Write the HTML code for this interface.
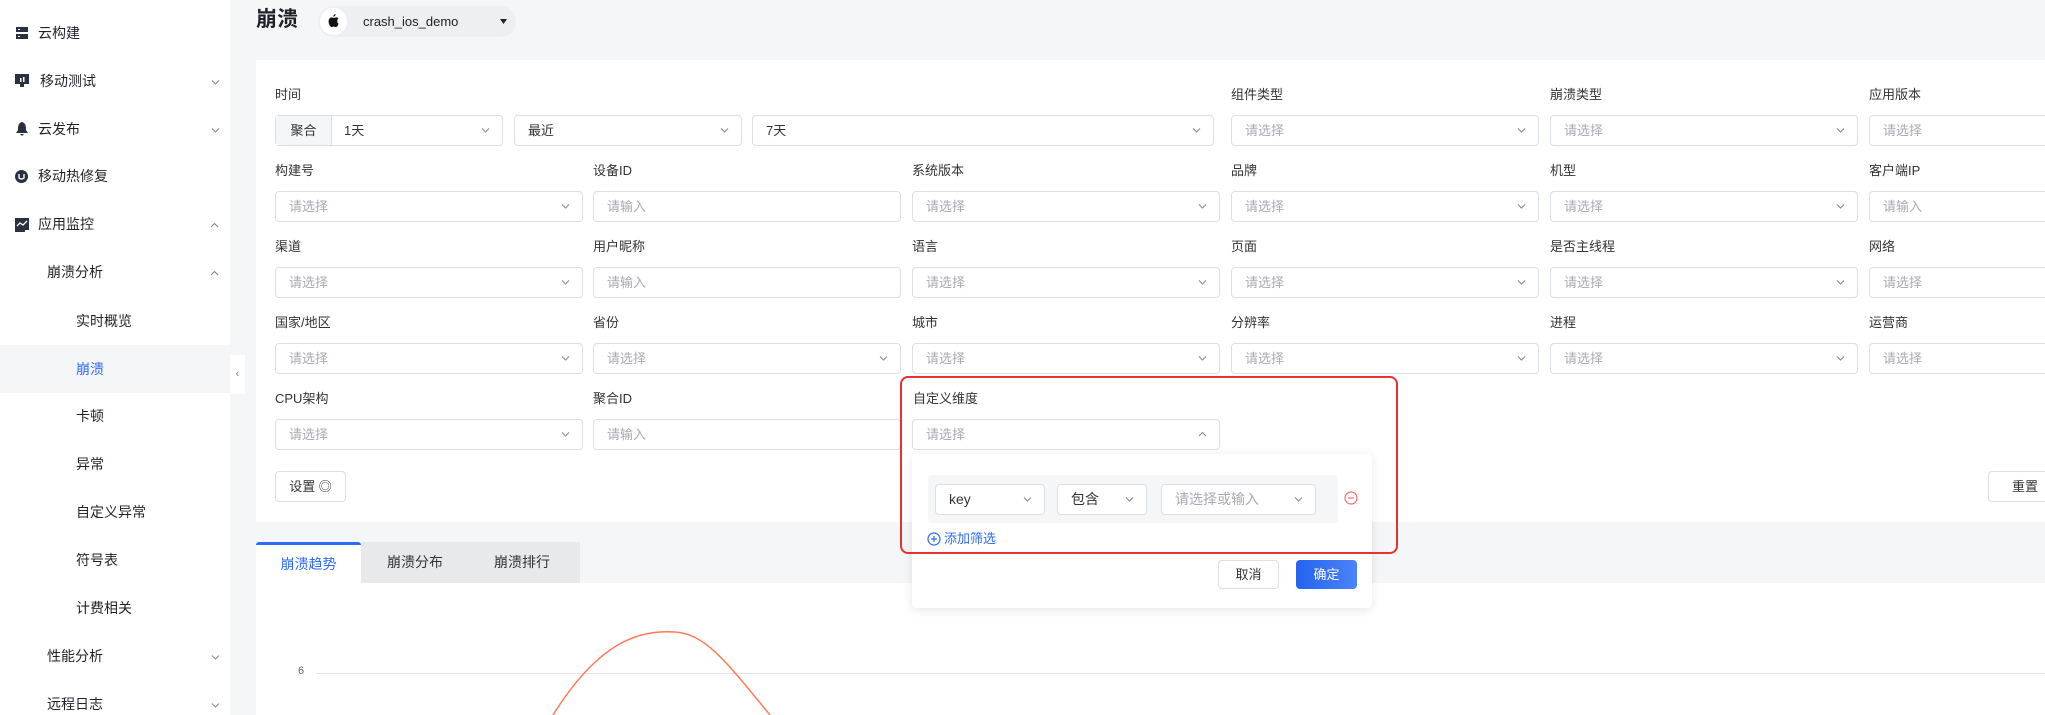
<!DOCTYPE html>
<html><head><meta charset="utf-8"><style>
*{box-sizing:border-box;margin:0;padding:0}
body{width:2045px;height:715px;overflow:hidden;background:#f5f6f8;font-family:"Liberation Sans","Noto Sans CJK SC",sans-serif;position:relative;color:#333}
.a{position:absolute}
.side{left:0;top:0;width:230px;height:715px;background:#fff}
.si{position:absolute;font-size:14px;color:#1f2329;line-height:20px}
.chev{position:absolute;width:9px;height:9px}
.lab{position:absolute;font-size:13px;color:#333;line-height:16px}
.in{position:absolute;height:31px;border:1px solid #dcdfe6;border-radius:4px;background:#fff;font-size:13px;color:#a8abb2;line-height:29px;padding-left:13px}
.in.v{color:#333}
.in svg{position:absolute;right:12px;top:11px}
.in.cut{border-right:none;border-radius:4px 0 0 4px}
.btn{position:absolute;border:1px solid #dcdfe6;border-radius:4px;background:#fff;font-size:13px;color:#333;text-align:center}
</style></head><body>
<div class="a side"></div>
<svg width="0" height="0" style="position:absolute"><defs><path id="dn" d="M1 1.5 L4.5 5 L8 1.5" fill="none" stroke="#888" stroke-width="1.1"/><path id="up" d="M1 5 L4.5 1.5 L8 5" fill="none" stroke="#888" stroke-width="1.1"/></defs></svg>

<!-- sidebar -->
<svg class="a" style="left:16px;top:27px" width="12" height="12"><rect x="0" y="0" width="12" height="5" fill="#2b3040"/><rect x="0" y="7" width="12" height="5" fill="#2b3040"/><rect x="2" y="2" width="2" height="1" fill="#fff"/><rect x="2" y="9" width="2" height="1" fill="#fff"/></svg>
<div class="si" style="left:38px;top:23px">云构建</div>
<svg class="a" style="left:15px;top:74px" width="14" height="13"><rect x="0" y="0" width="14" height="10" fill="#2b3040"/><rect x="5" y="10" width="4" height="3" fill="#2b3040"/><rect x="5" y="4" width="1.5" height="4" fill="#fff"/><rect x="8" y="3" width="1.5" height="5" fill="#fff"/></svg>
<div class="si" style="left:40px;top:71px">移动测试</div>
<svg class="chev" style="left:211px;top:78px" viewBox="0 0 9 7"><use href="#dn"/></svg>
<svg class="a" style="left:16px;top:122px" width="12" height="14"><path d="M6 0 C2 1 2 5 2 8 L0 11 L12 11 L10 8 C10 5 10 1 6 0Z M4 12 L8 12 L6 14Z" fill="#2b3040"/></svg>
<div class="si" style="left:38px;top:119px">云发布</div>
<svg class="chev" style="left:211px;top:126px" viewBox="0 0 9 7"><use href="#dn"/></svg>
<svg class="a" style="left:15px;top:170px" width="13" height="13"><circle cx="6.5" cy="6.5" r="6.5" fill="#2b3040"/><path d="M4 4 L4 8 Q6.5 10 9 8 L9 4" fill="none" stroke="#fff" stroke-width="1.4"/></svg>
<div class="si" style="left:38px;top:166px">移动热修复</div>
<svg class="a" style="left:15px;top:218px" width="14" height="14"><rect x="0" y="0" width="14" height="12" fill="#2b3040"/><path d="M2 8 L5 5 L8 7 L12 3" fill="none" stroke="#fff" stroke-width="1.3"/><rect x="0" y="12" width="10" height="2" fill="#2b3040"/></svg>
<div class="si" style="left:38px;top:214px">应用监控</div>
<svg class="chev" style="left:210px;top:221px" viewBox="0 0 9 7"><use href="#up"/></svg>
<div class="si" style="left:47px;top:262px">崩溃分析</div>
<svg class="chev" style="left:210px;top:269px" viewBox="0 0 9 7"><use href="#up"/></svg>
<div class="si" style="left:76px;top:311px">实时概览</div>
<div class="a" style="left:0;top:345px;width:230px;height:48px;background:#f5f6f8"></div>
<div class="si" style="left:76px;top:359px;color:#2f6bf5">崩溃</div>
<div class="si" style="left:76px;top:406px">卡顿</div>
<div class="si" style="left:76px;top:454px">异常</div>
<div class="si" style="left:76px;top:502px">自定义异常</div>
<div class="si" style="left:76px;top:550px">符号表</div>
<div class="si" style="left:76px;top:598px">计费相关</div>
<div class="si" style="left:47px;top:646px">性能分析</div>
<svg class="chev" style="left:211px;top:653px" viewBox="0 0 9 7"><use href="#dn"/></svg>
<div class="si" style="left:47px;top:694px">远程日志</div>
<svg class="chev" style="left:211px;top:701px" viewBox="0 0 9 7"><use href="#dn"/></svg>
<div class="a" style="left:230px;top:355px;width:15px;height:39px;background:#fff;font-size:11px;color:#888;line-height:39px;text-align:center">‹</div>

<!-- header -->
<div class="a" style="left:256px;top:6px;font-size:21px;font-weight:bold;color:#1f2329;line-height:28px">崩溃</div>
<div class="a" style="left:318px;top:6px;width:198px;height:31px;border-radius:16px;background:#eeeff2"></div>
<div class="a" style="left:320px;top:8px;width:27px;height:27px;border-radius:50%;background:#fff"></div>
<svg class="a" style="left:328px;top:14px" width="11" height="13" viewBox="0 0 11 13"><path d="M7.5 0 C7.6 1.4 6.6 2.7 5.3 2.7 C5.2 1.4 6.3 0.2 7.5 0Z M9.2 6.8 C9.2 5.3 10.4 4.6 10.5 4.5 C9.8 3.5 8.7 3.4 8.3 3.4 C7.3 3.3 6.4 4 5.9 4 C5.4 4 4.6 3.4 3.8 3.4 C2.7 3.5 1.7 4.1 1.1 5.1 C0 7.1 0.8 10 1.9 11.6 C2.4 12.4 3 13.2 3.8 13.1 C4.6 13.1 4.9 12.6 5.8 12.6 C6.8 12.6 7 13.1 7.9 13.1 C8.7 13.1 9.2 12.4 9.7 11.6 C10.3 10.7 10.6 9.9 10.6 9.8 C10.6 9.8 9.2 9.2 9.2 6.8Z" fill="#111"/></svg>
<div class="a" style="left:363px;top:13px;font-size:13px;color:#222;line-height:17px">crash_ios_demo</div>
<svg class="a" style="left:500px;top:19px" width="7" height="5"><path d="M0 0 L7 0 L3.5 5Z" fill="#222"/></svg>

<!-- filter card -->
<div class="a" style="left:256px;top:60px;width:1789px;height:462px;background:#fff"></div>
<div class="lab" style="left:275px;top:87px">时间</div>
<div class="in" style="left:275px;top:115px;width:228px;padding-left:0"><div class="a" style="left:0;top:0;width:56px;height:29px;background:#f5f6f8;border-right:1px solid #dcdfe6;color:#333;text-align:center">聚合</div><span class="a" style="left:68px;color:#333">1天</span><svg width="9" height="7"><use href="#dn"/></svg></div>
<div class="in v" style="left:514px;top:115px;width:228px">最近<svg width="9" height="7"><use href="#dn"/></svg></div>
<div class="in v" style="left:752px;top:115px;width:462px">7天<svg width="9" height="7"><use href="#dn"/></svg></div>

<div id="g"></div>
<script>
var cols=[275,593,912,1231,1550,1869];
var rows=[
[null,null,null,['组件类型','s'],['崩溃类型','s'],['应用版本','s']],
[['构建号','s'],['设备ID','i'],['系统版本','s'],['品牌','s'],['机型','s'],['客户端IP','i']],
[['渠道','s'],['用户昵称','i'],['语言','s'],['页面','s'],['是否主线程','s'],['网络','s']],
[['国家/地区','s'],['省份','s'],['城市','s'],['分辨率','s'],['进程','s'],['运营商','s']],
[['CPU架构','s'],['聚合ID','i'],null,null,null,null]];
var h='';
rows.forEach(function(r,ri){r.forEach(function(c,ci){if(!c)return;var ly=87+ri*76,iy=115+ri*76,x=cols[ci];
h+='<div class="lab" style="left:'+x+'px;top:'+ly+'px">'+c[0]+'</div>';
if(ci==5){h+='<div class="in cut" style="left:'+x+'px;top:'+iy+'px;width:176px">'+(c[1]=='s'?'请选择':'请输入')+'</div>';}
else h+='<div class="in" style="left:'+x+'px;top:'+iy+'px;width:308px">'+(c[1]=='s'?'请选择<svg width="9" height="7"><use href="#dn"/></svg>':'请输入')+'</div>';});});
document.getElementById('g').outerHTML=h;
</script>
<div class="btn" style="left:275px;top:471px;width:71px;height:31px;line-height:29px">设置 ◎</div>
<div class="btn" style="left:1988px;top:471px;width:57px;height:31px;line-height:29px;border-right:none;border-radius:4px 0 0 4px;text-align:left;padding-left:23px">重置</div>

<!-- tabs -->
<div class="a" style="left:256px;top:542px;width:105px;height:41px;background:#fff;border-top:3px solid #2f6bf5;border-radius:3px 3px 0 0;font-size:14px;color:#2f6bf5;text-align:center;line-height:38px">崩溃趋势</div>
<div class="a" style="left:361px;top:542px;width:219px;height:41px;background:#e8e9eb;font-size:14px;color:#333;line-height:41px"><span class="a" style="left:26px">崩溃分布</span><span class="a" style="left:133px">崩溃排行</span></div>
<div class="a" style="left:256px;top:583px;width:1789px;height:132px;background:#fff"></div>
<div class="a" style="left:298px;top:665px;font-size:11px;color:#666">6</div>
<div class="a" style="left:316px;top:673px;width:1729px;height:1px;background:#e3e4e8"></div>
<svg class="a" style="left:540px;top:620px" width="240" height="95"><path d="M13 95 C60 20 100 10 135 12 C165 14 185 40 230 95" fill="none" stroke="#ff7a57" stroke-width="1.5"/></svg>

<!-- custom dimension -->
<div class="lab" style="left:913px;top:391px">自定义维度</div>
<div class="in" style="left:912px;top:419px;width:308px">请选择<svg width="9" height="7"><use href="#up"/></svg></div>
<div class="a" style="left:912px;top:454px;width:460px;height:154px;background:#fff;border-radius:4px;box-shadow:0 2px 10px rgba(0,0,0,0.1)"></div>
<div class="a" style="left:928px;top:475px;width:410px;height:48px;background:#f5f6f8;border-radius:3px"></div>
<div class="in v" style="left:935px;top:484px;width:110px;font-size:14px">key<svg width="9" height="7"><use href="#dn"/></svg></div>
<div class="in v" style="left:1057px;top:484px;width:90px;font-size:14px">包含<svg width="9" height="7"><use href="#dn"/></svg></div>
<div class="in" style="left:1161px;top:484px;width:155px;font-size:14px">请选择或输入<svg width="9" height="7"><use href="#dn"/></svg></div>
<svg class="a" style="left:1344px;top:491px" width="14" height="14"><circle cx="7" cy="7" r="6" fill="none" stroke="#f56c6c" stroke-width="1.2"/><path d="M4 7 L10 7" stroke="#f56c6c" stroke-width="1.2"/></svg>
<svg class="a" style="left:927px;top:532px" width="14" height="14"><circle cx="7" cy="7" r="6" fill="none" stroke="#2f6bf5" stroke-width="1.2"/><path d="M4 7 L10 7 M7 4 L7 10" stroke="#2f6bf5" stroke-width="1.2"/></svg>
<div class="a" style="left:944px;top:531px;font-size:13px;color:#2f6bf5;line-height:16px">添加筛选</div>
<div class="btn" style="left:1218px;top:560px;width:61px;height:29px;line-height:27px">取消</div>
<div class="btn" style="left:1296px;top:560px;width:61px;height:29px;line-height:29px;border:none;background:linear-gradient(90deg,#2563f0,#4a84f7);color:#fff">确定</div>
<div class="a" style="left:900px;top:376px;width:498px;height:178px;border:2px solid #e8322f;border-radius:8px"></div>
</body></html>
